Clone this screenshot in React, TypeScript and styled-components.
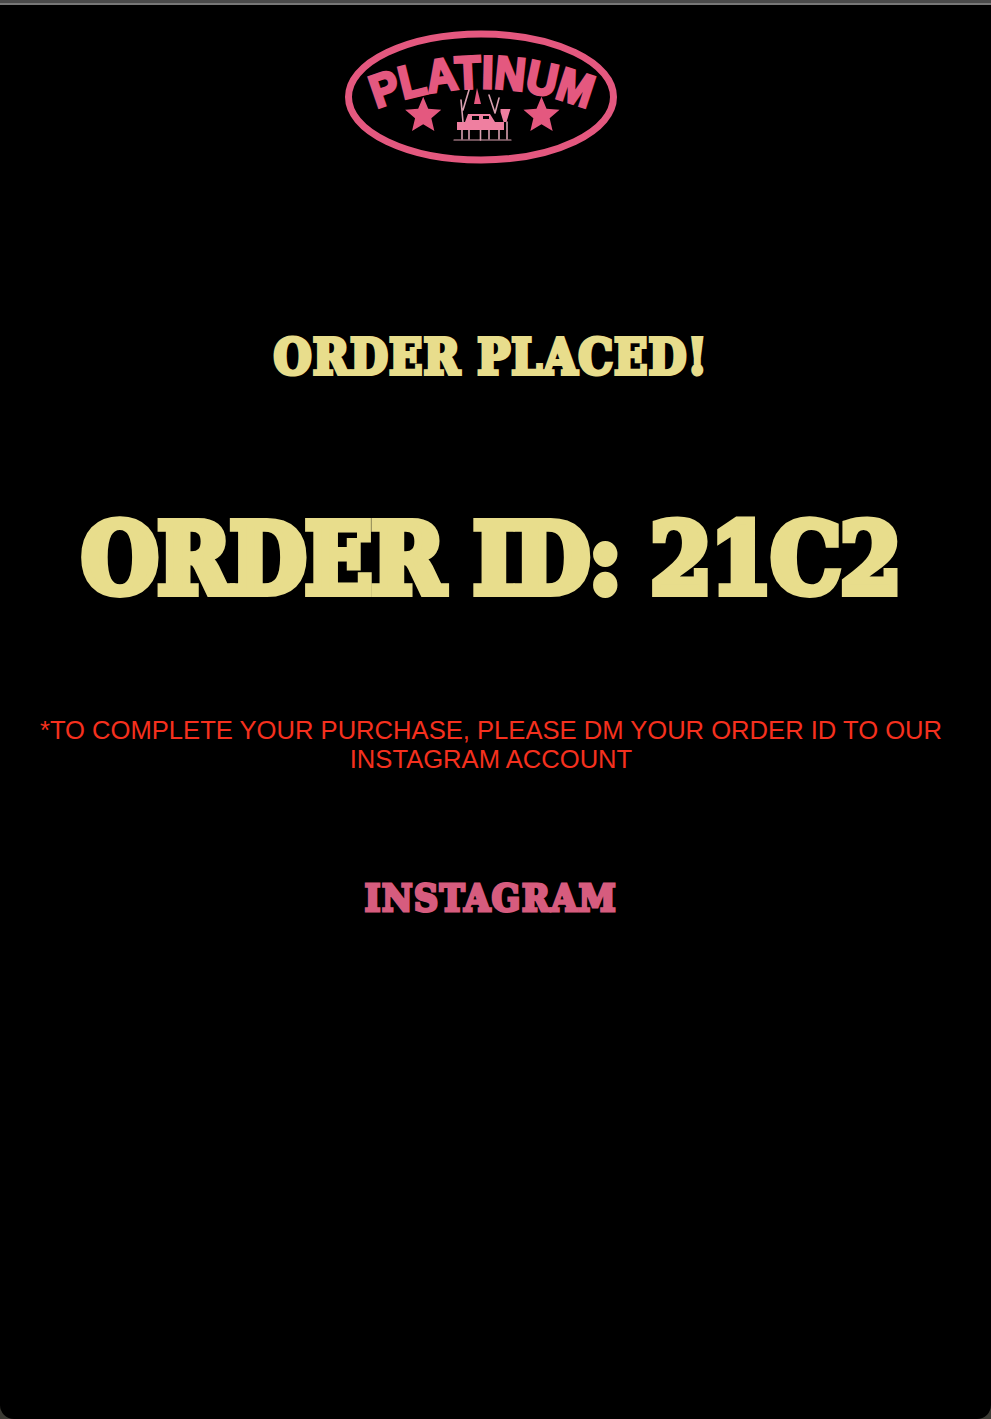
import styled, { createGlobalStyle } from 'styled-components';

const GlobalStyle = createGlobalStyle`
  html, body {
    margin: 0;
    padding: 0;
    background: #3b3a33;
  }
`

const TopBar = styled.div`
  height: 5px;
  background: linear-gradient(#4a4a4a 0, #4a4a4a 3px, #777 3px, #777 5px);
`

const Screen = styled.main`
  height: 1414px;
  box-sizing: border-box;
  background: #000;
  border-radius: 0 0 14px 14px;
  display: flex;
  flex-direction: column;
  align-items: center;
  overflow: hidden;
  padding: 21px 9px 0 0;
`

const Logo = styled.svg`
  width: 280px;
  height: 140px;
  margin-right: 20px;
  flex-shrink: 0;
`

const Heading = styled.h1<{ $size: number; $stroke: number; $color: string; $spacing: number }>`
  margin: 0;
  font-family: "DejaVu Serif Condensed", "DejaVu Serif", "Liberation Serif", serif;
  font-stretch: condensed;
  font-weight: 700;
  white-space: nowrap;
  font-size: ${(props) => props.$size}px;
  line-height: 1;
  letter-spacing: ${(props) => props.$spacing}px;
  color: ${(props) => props.$color};
  -webkit-text-stroke: ${(props) => props.$stroke}px ${(props) => props.$color};
`

const PlacedTitle = styled(Heading)`
  margin-top: 167px;
`

const OrderTitle = styled(Heading)`
  margin-top: 129px;
`

const Note = styled.p`
  margin: 108px 0 0;
  font-family: "Liberation Sans", Arial, sans-serif;
  font-size: 25.6px;
  line-height: 29px;
  color: #f5301e;
  text-align: center;
`

const InstagramLink = styled(Heading).attrs({ as: 'a', href: '#' })`
  margin-top: 106px;
  text-decoration: none;
`

function Star({ cx, cy }: { cx: number; cy: number }) {
  const r = 19
  const points = Array.from({ length: 10 }, (_, i) => {
    const radius = i % 2 === 0 ? r : r * 0.45
    const angle = -Math.PI / 2 + (i * Math.PI) / 5
    return `${cx + radius * Math.cos(angle)},${cy + radius * Math.sin(angle)}`
  }).join(' ')
  return <polygon points={points} fill="#e4587f" />
}

function PlatinumLogo() {
  return (
    <Logo viewBox="0 0 280 140">
      <defs>
        <path id="logo-arc" d="M 30 85 Q 140 39 252 85" fill="none" />
      </defs>
      <ellipse cx="140" cy="71" rx="132.5" ry="63" fill="none" stroke="#e4587f" strokeWidth="7" />
      <text
        fontFamily="'Liberation Sans', Arial, sans-serif"
        fontWeight="700"
        fontSize="46"
        fill="#e4587f"
        stroke="#e4587f"
        strokeWidth="3"
        textAnchor="middle"
      >
        <textPath href="#logo-arc" startOffset="50%" textLength="216" lengthAdjust="spacingAndGlyphs">
          PLATINUM
        </textPath>
      </text>
      <Star cx={82.2} cy={89.7} />
      <Star cx={200.5} cy={89.7} />
      {/* oil rig */}
      <g fill="none" stroke="#d9a0b0" strokeWidth="1.6" strokeLinecap="round">
        <path d="M120 74l2 22M122 84l6-20M148 69l6 18M158 72l-4 15" />
        <path d="M121 104v9M128 104v9M139.500 104v10M148 104v9M158 104v9M166 96v17" />
        <path d="M113 114h57" strokeWidth="1.2" />
      </g>
      <path d="M136 62l4 16h-7z" fill="#e4587f" />
      <path d="M116 96h8l3-8h22l5 8h9v8h-47z" fill="#ef7fa0" />
      <path d="M159.500 83h10l-1 3-3 10h-3l-3-10z" fill="#ef7fa0" />
      <path d="M131 90h7v4h-7zM142 90h6v3h-6z" fill="#000" />
    </Logo>
  )
}

function App() {
  return (
    <>
      <GlobalStyle />
      <TopBar />
      <Screen>
        <PlatinumLogo />
        <PlacedTitle $size={48} $stroke={4} $color="#e8dd8c" $spacing={1.5}>ORDER PLACED!</PlacedTitle>
        <OrderTitle $size={98} $stroke={8} $color="#e8dd8c" $spacing={-1}>ORDER ID: 21C2</OrderTitle>
        <Note>
          *TO COMPLETE YOUR PURCHASE, PLEASE DM YOUR ORDER ID TO OUR
          <br />
          INSTAGRAM ACCOUNT
        </Note>
        <InstagramLink $size={37} $stroke={3} $color="#d65c7e" $spacing={1.7}>INSTAGRAM</InstagramLink>
      </Screen>
    </>
  )
}

export default App;
